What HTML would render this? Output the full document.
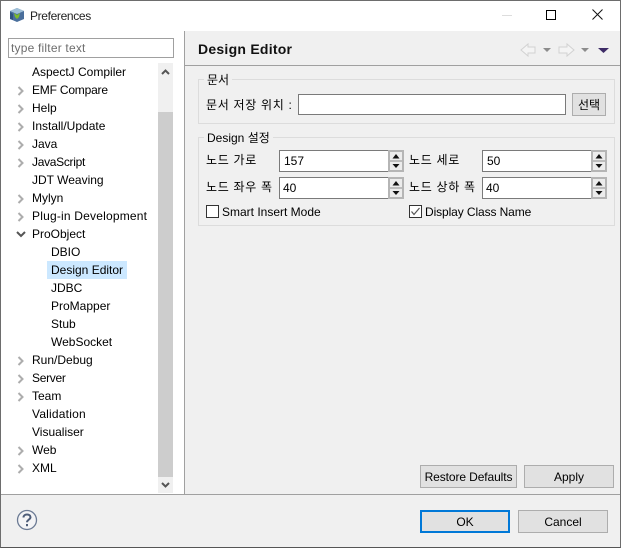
<!DOCTYPE html>
<html><head><meta charset="utf-8">
<style>
html,body{margin:0;padding:0;width:621px;height:548px;overflow:hidden;background:#f0f0f0}
body{position:relative;font-family:"Liberation Sans","Noto Sans CJK KR",sans-serif;font-size:12px;color:#000}
div,span,svg{position:absolute;box-sizing:border-box}
.t{white-space:nowrap;line-height:18px;height:18px}
.k{letter-spacing:.7px}
.b{background:#e1e1e1;border:1px solid #adadad;text-align:center;line-height:22px}
.inp{background:#fff;border:1px solid #7a7a7a;line-height:20px;padding-left:5px}
.sp{background:#fff;border:1px solid #7a7a7a;border-right:0;line-height:20px;padding-left:4px}
.gr{border:1px solid #dcdcdc}
.lg{background:#f0f0f0;line-height:14px;padding:0 3px;white-space:nowrap}
</style></head><body>
<div style="left:0;top:0;width:621px;height:31px;background:#fff"></div>
<div style="top:31px;left:1px;width:183px;height:463px;background:#fff"></div>
<div style="left:184px;top:31px;width:1px;height:463px;background:#a0a0a0"></div>
<div style="left:0;top:494px;width:621px;height:1px;background:#a0a0a0"></div>
<div style="left:0;top:0;width:621px;height:548px;border:1px solid #6d6d6d;border-bottom-color:#555;z-index:9"></div>

<svg style="left:9px;top:7px" width="16" height="16" viewBox="0 0 16 16"><path d="M8 1 15 4V12L8 15 1 12V4Z" fill="#4a6f9c"/><path d="M8 1 15 4 8 7 1 4Z" fill="#9fc0d8"/><path d="M5 6 8 8 11 6 10 10 8 12 6 10Z" fill="#7dbb2a"/><path d="M1 5 4 7V13L1 12Z" fill="#2f5480"/></svg>
<div class="t" style="left:30px;top:7px;color:#222;letter-spacing:-.35px">Preferences</div>
<div style="left:502px;top:15px;width:10px;height:1px;background:#ddd"></div>
<div style="left:546px;top:10px;width:10px;height:10px;border:1px solid #000"></div>
<svg style="left:592px;top:9px" width="11" height="11" viewBox="0 0 11 11"><path d="M.5.5 10.5 10.5M10.5.5.5 10.5" stroke="#111" stroke-width="1" fill="none"/></svg>

<div style="left:8px;top:38px;width:166px;height:20px;border:1px solid #a0a0a0;background:#fff;padding-left:2px;line-height:18px;color:#6d6d6d;letter-spacing:.2px">type filter text</div>

<div style="left:158px;top:63px;width:15px;height:430px;background:#f0f0f0"></div>
<div style="left:158px;top:112px;width:15px;height:365px;background:#cdcdcd"></div>
<svg style="left:161px;top:68px" width="9" height="8" viewBox="0 0 9 8"><path d="M1 6 4.500 2.500 8 6" stroke="#555" stroke-width="2" fill="none"/></svg>
<svg style="left:161px;top:481px" width="9" height="8" viewBox="0 0 9 8"><path d="M1 2 4.500 5.500 8 2" stroke="#555" stroke-width="2" fill="none"/></svg>

<div style="left:47px;top:261px;width:80px;height:18px;background:#cce8ff"></div>

<div class="t" style="left:32px;top:63px">AspectJ Compiler</div>
<div class="t" style="left:32px;top:81px;letter-spacing:-.2px">EMF Compare</div>
<div class="t" style="left:32px;top:99px">Help</div>
<div class="t" style="left:32px;top:117px">Install/Update</div>
<div class="t" style="left:32px;top:135px">Java</div>
<div class="t" style="left:32px;top:153px;letter-spacing:-.3px">JavaScript</div>
<div class="t" style="left:32px;top:171px">JDT Weaving</div>
<div class="t" style="left:32px;top:189px">Mylyn</div>
<div class="t" style="left:32px;top:207px;letter-spacing:.2px">Plug-in Development</div>
<div class="t" style="left:32px;top:225px">ProObject</div>
<div class="t" style="left:51px;top:243px">DBIO</div>
<div class="t" style="left:51px;top:261px">Design Editor</div>
<div class="t" style="left:51px;top:279px">JDBC</div>
<div class="t" style="left:51px;top:297px">ProMapper</div>
<div class="t" style="left:51px;top:315px">Stub</div>
<div class="t" style="left:51px;top:333px">WebSocket</div>
<div class="t" style="left:32px;top:351px">Run/Debug</div>
<div class="t" style="left:32px;top:369px;letter-spacing:-.3px">Server</div>
<div class="t" style="left:32px;top:387px">Team</div>
<div class="t" style="left:32px;top:405px;letter-spacing:.2px">Validation</div>
<div class="t" style="left:32px;top:423px">Visualiser</div>
<div class="t" style="left:32px;top:441px">Web</div>
<div class="t" style="left:32px;top:459px">XML</div>

<svg style="left:16px;top:63px" width="12" height="414" viewBox="0 0 12 414" fill="none" stroke="#adadad" stroke-width="2">
<path d="M2.500 24 6.500 28 2.500 32M2.500 42 6.500 46 2.500 50M2.500 60 6.500 64 2.500 68M2.500 78 6.500 82 2.500 86M2.500 96 6.500 100 2.500 104M2.500 132 6.500 136 2.500 140M2.500 150 6.500 154 2.500 158M2.500 294 6.500 298 2.500 302M2.500 312 6.500 316 2.500 320M2.500 330 6.500 334 2.500 338M2.500 384 6.500 388 2.500 392M2.500 402 6.500 406 2.500 410"/>
<path d="M1 169 5 173 9 169" stroke="#555"/>
</svg>

<div class="t" style="left:198px;top:40px;font-size:14px;font-weight:bold;color:#111;letter-spacing:.25px">Design Editor</div>
<div style="left:185px;top:65px;width:435px;height:1px;background:#a0a0a0"></div>

<svg style="left:520px;top:42px" width="90" height="16" viewBox="0 0 90 16">
<path d="M1 8 8 2V5H15V11H8V14Z" fill="#f4f4f4" stroke="#d2d2d2"/>
<path d="M23 6H31L27 10Z" fill="#8c8c8c"/>
<path d="M54 8 47 2V5H39V11H47V14Z" fill="#f4f4f4" stroke="#d2d2d2"/>
<path d="M61 6H69L65 10Z" fill="#8c8c8c"/>
<path d="M78 6H89L83.500 11Z" fill="#3d2b66"/>
</svg>

<div class="gr" style="left:198px;top:79px;width:417px;height:45px"></div>
<div class="lg" style="left:204px;top:73px">문서</div>
<div class="t k" style="left:206px;top:96px">문서 저장 위치 :</div>
<div class="inp" style="left:298px;top:94px;width:268px;height:21px"></div>
<div class="b" style="left:572px;top:93px;width:34px;height:23px">선택</div>

<div class="gr" style="left:198px;top:137px;width:417px;height:89px"></div>
<div class="lg" style="left:204px;top:131px">Design 설정</div>

<div class="t k" style="left:206px;top:151px">노드 가로</div>
<div class="t k" style="left:409px;top:151px">노드 세로</div>
<div class="t k" style="left:206px;top:178px">노드 좌우 폭</div>
<div class="t k" style="left:409px;top:178px">노드 상하 폭</div>

<div class="sp" style="left:279px;top:150px;width:109px;height:22px;padding-left:4px">157</div>
<div class="sp" style="left:482px;top:150px;width:109px;height:22px;padding-left:4px">50</div>
<div class="sp" style="left:279px;top:177px;width:109px;height:22px;padding-left:3px">40</div>
<div class="sp" style="left:482px;top:177px;width:109px;height:22px;padding-left:3px">40</div>

<svg style="left:388px;top:150px" width="16" height="22" viewBox="0 0 16 22"><rect x="1" y="1" width="14" height="20" fill="#bdbdbd" stroke="#b5b5b5" stroke-width="2"/><rect x="2" y="2" width="12" height="8" fill="#ececec"/><rect x="2" y="12" width="12" height="8" fill="#ececec"/><path d="M4.500 8.500 8 4 11.500 8.500ZM4.500 14H11.500L8 18Z" fill="#111"/></svg>
<svg style="left:591px;top:150px" width="16" height="22" viewBox="0 0 16 22"><rect x="1" y="1" width="14" height="20" fill="#bdbdbd" stroke="#b5b5b5" stroke-width="2"/><rect x="2" y="2" width="12" height="8" fill="#ececec"/><rect x="2" y="12" width="12" height="8" fill="#ececec"/><path d="M4.500 8.500 8 4 11.500 8.500ZM4.500 14H11.500L8 18Z" fill="#111"/></svg>
<svg style="left:388px;top:177px" width="16" height="22" viewBox="0 0 16 22"><rect x="1" y="1" width="14" height="20" fill="#bdbdbd" stroke="#b5b5b5" stroke-width="2"/><rect x="2" y="2" width="12" height="8" fill="#ececec"/><rect x="2" y="12" width="12" height="8" fill="#ececec"/><path d="M4.500 8.500 8 4 11.500 8.500ZM4.500 14H11.500L8 18Z" fill="#111"/></svg>
<svg style="left:591px;top:177px" width="16" height="22" viewBox="0 0 16 22"><rect x="1" y="1" width="14" height="20" fill="#bdbdbd" stroke="#b5b5b5" stroke-width="2"/><rect x="2" y="2" width="12" height="8" fill="#ececec"/><rect x="2" y="12" width="12" height="8" fill="#ececec"/><path d="M4.500 8.500 8 4 11.500 8.500ZM4.500 14H11.500L8 18Z" fill="#111"/></svg>

<div style="left:206px;top:205px;width:13px;height:13px;background:#fff;border:1px solid #333"></div>
<div class="t" style="left:222px;top:203px">Smart Insert Mode</div>
<svg style="left:409px;top:205px" width="13" height="13" viewBox="0 0 13 13"><rect x=".5" y=".5" width="12" height="12" fill="#fff" stroke="#333"/><path d="M2.500 6.500 5 9.500 10.500 3" stroke="#555" stroke-width="1.200" fill="none"/></svg>
<div class="t" style="left:425px;top:203px;letter-spacing:-.1px">Display Class Name</div>

<div class="b" style="left:420px;top:465px;width:97px;height:23px;letter-spacing:-.1px">Restore Defaults</div>
<div class="b" style="left:524px;top:465px;width:90px;height:23px">Apply</div>
<div class="b" style="left:420px;top:510px;width:90px;height:23px;border:2px solid #0078d7;line-height:20px">OK</div>
<div class="b" style="left:518px;top:510px;width:90px;height:23px">Cancel</div>

<svg style="left:16px;top:509px" width="22" height="22" viewBox="0 0 22 22"><circle cx="11" cy="11" r="9.500" fill="#f4f4f6" stroke="#6b7a94" stroke-width="1.300"/><path d="M7.500 8.500C7.500 6.500 9 5.500 11 5.500 13.200 5.500 14.500 6.700 14.500 8.300 14.500 10.500 11 10.800 11 13.200" fill="none" stroke="#4d5c78" stroke-width="2"/><rect x="10" y="15" width="2" height="2.200" fill="#4d5c78"/></svg>
</body></html>
